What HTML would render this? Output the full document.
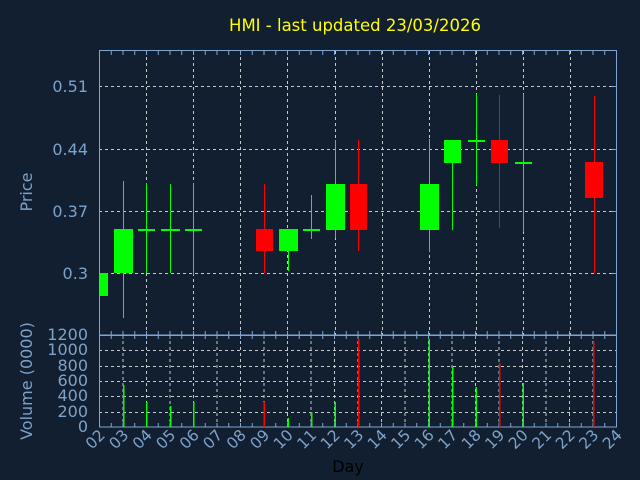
<!DOCTYPE html>
<html><head><meta charset="utf-8"><style>
html,body{margin:0;padding:0;background:#111f30;}
svg{display:block;font-family:"DejaVu Sans","Liberation Sans",sans-serif;}
</style></head><body>
<svg width="640" height="480" viewBox="0 0 640 480" xmlns="http://www.w3.org/2000/svg">
<defs>
<pattern id="tk" x="99" y="0" width="11.75" height="480" patternUnits="userSpaceOnUse">
<rect x="0" y="0" width="1" height="480" fill="#7fa6d2"/>
</pattern>
</defs>
<rect width="640" height="480" fill="#111f30"/>
<text x="355" y="31" fill="#ffff00" font-size="16.5" text-anchor="middle">HMI - last updated 23/03/2026</text>

<g stroke="#c8c8c8" stroke-width="1" stroke-dasharray="3,3" fill="none">
<line x1="99" y1="86.5" x2="617" y2="86.5"/>
<line x1="99" y1="149.5" x2="617" y2="149.5"/>
<line x1="99" y1="211.5" x2="617" y2="211.5"/>
<line x1="99" y1="273.5" x2="617" y2="273.5"/>
<line x1="146.5" y1="51" x2="146.5" y2="335"/>
<line x1="193.5" y1="51" x2="193.5" y2="335"/>
<line x1="240.5" y1="51" x2="240.5" y2="335"/>
<line x1="287.5" y1="51" x2="287.5" y2="335"/>
<line x1="335.5" y1="51" x2="335.5" y2="335"/>
<line x1="382.5" y1="51" x2="382.5" y2="335"/>
<line x1="429.5" y1="51" x2="429.5" y2="335"/>
<line x1="476.5" y1="51" x2="476.5" y2="335"/>
<line x1="523.5" y1="51" x2="523.5" y2="335"/>
<line x1="570.5" y1="51" x2="570.5" y2="335"/>
</g>
<g stroke="#c8c8c8" stroke-width="1" stroke-dasharray="3,3" fill="none">
<line x1="99" y1="350.5" x2="617" y2="350.5"/>
<line x1="99" y1="366.5" x2="617" y2="366.5"/>
<line x1="99" y1="381.5" x2="617" y2="381.5"/>
<line x1="99" y1="396.5" x2="617" y2="396.5"/>
<line x1="99" y1="412.5" x2="617" y2="412.5"/>
<line x1="123" y1="335" x2="123" y2="427"/><line x1="146.5" y1="335" x2="146.5" y2="427"/>
<line x1="170" y1="335" x2="170" y2="427"/><line x1="193.5" y1="335" x2="193.5" y2="427"/>
<line x1="217" y1="335" x2="217" y2="427"/><line x1="240.5" y1="335" x2="240.5" y2="427"/>
<line x1="264" y1="335" x2="264" y2="427"/><line x1="287.5" y1="335" x2="287.5" y2="427"/>
<line x1="311" y1="335" x2="311" y2="427"/><line x1="334.5" y1="335" x2="334.5" y2="427"/>
<line x1="358" y1="335" x2="358" y2="427"/><line x1="381.5" y1="335" x2="381.5" y2="427"/>
<line x1="405" y1="335" x2="405" y2="427"/><line x1="428.5" y1="335" x2="428.5" y2="427"/>
<line x1="452" y1="335" x2="452" y2="427"/><line x1="475.5" y1="335" x2="475.5" y2="427"/>
<line x1="499" y1="335" x2="499" y2="427"/><line x1="522.5" y1="335" x2="522.5" y2="427"/>
<line x1="546" y1="335" x2="546" y2="427"/><line x1="569.5" y1="335" x2="569.5" y2="427"/>
<line x1="593" y1="335" x2="593" y2="427"/>
</g>

<rect x="99" y="51" width="518" height="4" fill="url(#tk)"/>
<rect x="99" y="331" width="518" height="4" fill="url(#tk)"/>
<rect x="99" y="335" width="518" height="4" fill="url(#tk)"/>
<rect x="99" y="423" width="518" height="4" fill="url(#tk)"/>
<g stroke="#7fa6d2" stroke-width="1">
<line x1="612" y1="86.5" x2="617" y2="86.5"/><line x1="612" y1="149.5" x2="617" y2="149.5"/>
<line x1="612" y1="211.5" x2="617" y2="211.5"/><line x1="612" y1="273.5" x2="617" y2="273.5"/>
</g>
<rect x="99.5" y="50.5" width="517" height="284.5" fill="none" stroke="#7fa6d2"/>
<rect x="99.5" y="335.5" width="517" height="91.5" fill="none" stroke="#7fa6d2"/>

<g stroke="#00ff00" stroke-width="1">
<line x1="123.5" y1="181" x2="123.5" y2="318"/>
<line x1="146.5" y1="183" x2="146.5" y2="273"/>
<line x1="170.5" y1="184" x2="170.5" y2="273"/>
<line x1="193.5" y1="183" x2="193.5" y2="275"/>
<line x1="288.5" y1="229" x2="288.5" y2="271"/>
<line x1="311.5" y1="195" x2="311.5" y2="239"/>
<line x1="335.5" y1="140" x2="335.5" y2="238"/>
<line x1="429.5" y1="139" x2="429.5" y2="252"/>
<line x1="452.5" y1="140" x2="452.5" y2="230"/>
<line x1="476.5" y1="94" x2="476.5" y2="185"/>
<line x1="523.5" y1="94" x2="523.5" y2="232"/>
</g>
<g stroke="#ff0000" stroke-width="1">
<line x1="264.5" y1="184" x2="264.5" y2="273"/>
<line x1="358.5" y1="140" x2="358.5" y2="251"/>
<line x1="499.5" y1="95" x2="499.5" y2="228"/>
<line x1="594.5" y1="96" x2="594.5" y2="273"/>
</g>
<g fill="#00ff00">
<rect x="100" y="273" width="8" height="23"/>
<rect x="114" y="229" width="19" height="44"/>
<rect x="138" y="229" width="17" height="2"/>
<rect x="161" y="229" width="19" height="2"/>
<rect x="185" y="229" width="17" height="2"/>
<rect x="279" y="229" width="19" height="22"/>
<rect x="303" y="229" width="17" height="2"/>
<rect x="326" y="184" width="19" height="46"/>
<rect x="420" y="184" width="19" height="46"/>
<rect x="444" y="140" width="17" height="23"/>
<rect x="468" y="140" width="17" height="2"/>
<rect x="515" y="162" width="17" height="2"/>
</g>
<g fill="#ff0000">
<rect x="256" y="229" width="17" height="22"/>
<rect x="350" y="184" width="17" height="46"/>
<rect x="491" y="140" width="17" height="23"/>
<rect x="585" y="162" width="18" height="36"/>
</g>

<g fill="#00ff00">
<rect x="123" y="385" width="1.5" height="42"/>
<rect x="146" y="402" width="1.5" height="25"/>
<rect x="170" y="406" width="1.5" height="21"/>
<rect x="193" y="402" width="1.5" height="25"/>
<rect x="287.5" y="418" width="1.5" height="9"/>
<rect x="311" y="412" width="1.5" height="15"/>
<rect x="334.5" y="402" width="1.5" height="25"/>
<rect x="428.5" y="339" width="1.5" height="88"/>
<rect x="452" y="367" width="1.5" height="60"/>
<rect x="475.5" y="387" width="1.5" height="40"/>
<rect x="522.5" y="383" width="1.5" height="44"/>
</g>
<g fill="#ff0000">
<rect x="263.5" y="402" width="1.5" height="25"/>
<rect x="358" y="339" width="1.5" height="88"/>
<rect x="499" y="363" width="1.5" height="64"/>
<rect x="593" y="342" width="1.5" height="85"/>
</g>

<g fill="#7ea2c8" font-size="16" text-anchor="end">
<text x="88" y="92">0.51</text>
<text x="88" y="155">0.44</text>
<text x="88" y="217">0.37</text>
<text x="88" y="279">0.3</text>
<text x="88" y="340">1200</text>
<text x="88" y="355">1000</text>
<text x="88" y="371">800</text>
<text x="88" y="386">600</text>
<text x="88" y="401">400</text>
<text x="88" y="417">200</text>
<text x="88" y="432">0</text>
</g>
<text transform="translate(32,192) rotate(-90)" fill="#7ea2c8" font-size="16" text-anchor="middle">Price</text>
<text transform="translate(32,381) rotate(-90)" fill="#7ea2c8" font-size="16" text-anchor="middle">Volume (0000)</text>

<g fill="#7ea2c8" font-size="15.5" text-anchor="end">
<text transform="translate(106,436) rotate(-45)">02</text>
<text transform="translate(129.5,436) rotate(-45)">03</text>
<text transform="translate(153,436) rotate(-45)">04</text>
<text transform="translate(176.5,436) rotate(-45)">05</text>
<text transform="translate(200,436) rotate(-45)">06</text>
<text transform="translate(223.5,436) rotate(-45)">07</text>
<text transform="translate(247,436) rotate(-45)">08</text>
<text transform="translate(270.5,436) rotate(-45)">09</text>
<text transform="translate(294,436) rotate(-45)">10</text>
<text transform="translate(317.5,436) rotate(-45)">11</text>
<text transform="translate(341,436) rotate(-45)">12</text>
<text transform="translate(364.5,436) rotate(-45)">13</text>
<text transform="translate(388,436) rotate(-45)">14</text>
<text transform="translate(411.5,436) rotate(-45)">15</text>
<text transform="translate(435,436) rotate(-45)">16</text>
<text transform="translate(458.5,436) rotate(-45)">17</text>
<text transform="translate(482,436) rotate(-45)">18</text>
<text transform="translate(505.5,436) rotate(-45)">19</text>
<text transform="translate(529,436) rotate(-45)">20</text>
<text transform="translate(552.5,436) rotate(-45)">21</text>
<text transform="translate(576,436) rotate(-45)">22</text>
<text transform="translate(599.5,436) rotate(-45)">23</text>
<text transform="translate(623,436) rotate(-45)">24</text>
</g>
<text x="348" y="472" fill="#000000" font-size="16" text-anchor="middle">Day</text>
</svg>
</body></html>
